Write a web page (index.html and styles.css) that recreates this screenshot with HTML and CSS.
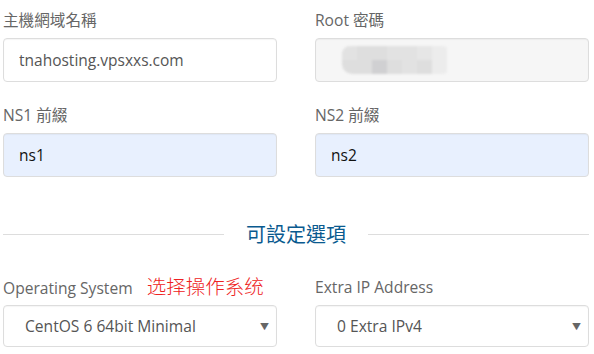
FILE: index.html
```html
<!DOCTYPE html>
<html lang="zh-Hant">

<head>
    <meta charset="UTF-8" />
    <meta name="viewport" content="width=device-width, initial-scale=1.0" />
    <title>可設定選項</title>
    <link rel="stylesheet" href="styles.css">
</head>

<body>
    <div class="form">
        <div class="row">
            <div class="form-group">
                <label for="hostname">主機網域名稱</label>
                <input type="text" id="hostname" value="tnahosting.vpsxxs.com">
            </div>
            <div class="form-group">
                <label for="rootpw">Root 密碼</label>
                <div class="field field-readonly" id="rootpw">
                    <span class="blur">
                        <i class="c1"></i><i class="c2"></i><i class="c2"></i><i class="c1"></i><i class="c1"></i><i class="c3"></i><i class="c4"></i>
                        <i class="c2"></i><i class="c2"></i><i class="c5"></i><i class="c2"></i><i class="c1"></i><i class="c2"></i><i class="c4"></i>
                    </span>
                </div>
            </div>
        </div>

        <div class="row">
            <div class="form-group">
                <label for="ns1">NS1 前綴</label>
                <input type="text" id="ns1" class="autofill" value="ns1">
            </div>
            <div class="form-group">
                <label for="ns2">NS2 前綴</label>
                <input type="text" id="ns2" class="autofill" value="ns2">
            </div>
        </div>

        <div class="divider">
            <span class="line"></span>
            <h2>可設定選項</h2>
            <span class="line"></span>
        </div>

        <div class="row">
            <div class="form-group">
                <label>Operating System <span class="hint">选择操作系统</span></label>
                <div class="field select">
                    <span>CentOS 6 64bit Minimal</span>
                    <span class="caret">▼</span>
                </div>
            </div>
            <div class="form-group">
                <label>Extra IP Address</label>
                <div class="field select">
                    <span>0 Extra IPv4</span>
                    <span class="caret">▼</span>
                </div>
            </div>
        </div>
    </div>
</body>

</html>
```

FILE: styles.css
```css
body {
    margin: 0;
    background-color: #ffffff;
    font-family: 'Open Sans', 'Noto Sans CJK TC', sans-serif;
}

.form {
    padding: 9px 5px 0 3px;
}

.row {
    display: grid;
    grid-template-columns: 274px 274px;
    column-gap: 38px;
}

.form-group {
    display: flex;
    flex-direction: column;
    margin-bottom: 22px;
}

.form-group label {
    font-size: 15.6px;
    line-height: 22px;
    height: 22px;
    color: #666666;
    margin-bottom: 7px;
    white-space: nowrap;
}

.hint {
    color: #ee2222;
    font-size: 19.5px;
    font-weight: 300;
    margin-left: 10px;
}

.form-group input,
.field {
    box-sizing: border-box;
    height: 44px;
    padding: 0 15px;
    font-family: inherit;
    font-size: 15.5px;
    color: #555555;
    border: 1px solid #dddddd;
    border-radius: 4px;
    background-color: #ffffff;
    box-shadow: inset 0 1px 1px rgba(0, 0, 0, 0.04);
    outline: none;
}

.form-group input.autofill {
    background-color: #e8f0fe;
    color: #111111;
}

.field-readonly {
    display: flex;
    align-items: center;
    background-color: #f6f6f6;
}

.blur {
    display: grid;
    grid-template-columns: repeat(7, 15px);
    grid-auto-rows: 14px;
    margin-left: 11px;
    filter: blur(1.2px);
    border-radius: 8px 4px 4px 10px;
    overflow: hidden;
}

.blur i { display: block; }
.blur .c1 { background-color: #e2e2e2; }
.blur .c2 { background-color: #dedede; }
.blur .c3 { background-color: #e6e6e6; }
.blur .c4 { background-color: #ececec; }
.blur .c5 { background-color: #d0d0d2; }

.divider {
    display: flex;
    align-items: center;
    margin-top: -22px;
    padding: 45px 0 29px;
}

.divider .line {
    flex: 1;
    height: 1px;
    background-color: #dddddd;
}

.divider h2 {
    margin: 0 22px;
    font-size: 20px;
    font-weight: 400;
    line-height: 25px;
    color: #0a5a8f;
}

.select {
    display: flex;
    align-items: center;
    justify-content: space-between;
    height: 42px;
    padding: 0 7px 0 21px;
    font-size: 15.6px;
}

.caret {
    font-size: 9px;
    color: #666666;
}
```
